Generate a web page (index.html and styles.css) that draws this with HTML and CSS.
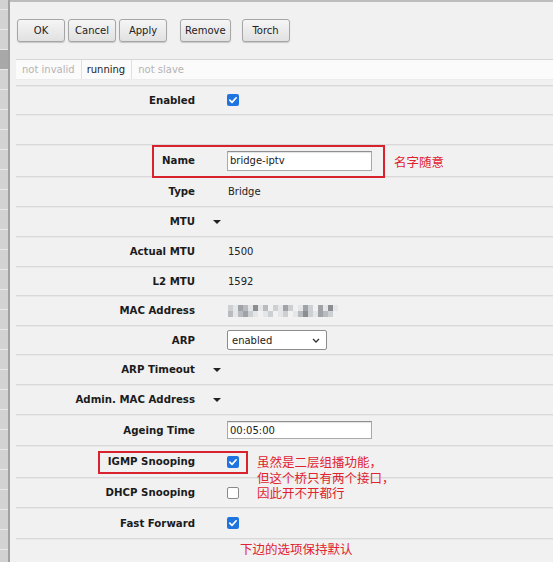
FILE: index.html
```html
<!DOCTYPE html>
<html lang="zh">
<head>
<meta charset="utf-8">
<title>Bridge</title>
<link rel="stylesheet" href="styles.css">
</head>
<body>
<div class="app">
  <div class="rail">
    <div class="rail-cell first"></div>
    <div class="rail-cell"></div>
    <div class="rail-cell"></div>
    <div class="rail-cell sel"></div>
    <div class="rail-cell"></div>
    <div class="rail-cell"></div>
    <div class="rail-cell"></div>
    <div class="rail-cell"></div>
    <div class="rail-cell"></div>
    <div class="rail-cell"></div>
    <div class="rail-cell"></div>
    <div class="rail-cell"></div>
    <div class="rail-cell"></div>
    <div class="rail-cell"></div>
    <div class="rail-cell"></div>
    <div class="rail-cell"></div>
    <div class="rail-cell"></div>
    <div class="rail-cell"></div>
    <div class="rail-cell"></div>
    <div class="rail-cell"></div>
    <div class="rail-cell"></div>
    <div class="rail-cell"></div>
    <div class="rail-cell"></div>
    <div class="rail-cell"></div>
    <div class="rail-cell"></div>
    <div class="rail-cell"></div>
    <div class="rail-cell"></div>
    <div class="rail-cell"></div>
    <div class="rail-cell"></div>
  </div>
  <main class="main">
    <div class="toolbar">
      <button class="btn">OK</button>
      <button class="btn">Cancel</button>
      <button class="btn">Apply</button>
      <button class="btn sep1">Remove</button>
      <button class="btn sep2">Torch</button>
    </div>
    <div class="status">
      <span class="tab">not invalid</span>
      <span class="tab on">running</span>
      <span class="tab last">not slave</span>
    </div>
    <div class="form">
      <div class="row s">
        <span class="label">Enabled</span><span></span>
        <span class="value"><span class="cb on"><svg viewBox="0 0 12 12" width="12" height="12"><path d="M2.8 6.2l2.2 2.2 4.2-4.6" fill="none" stroke="#fff" stroke-width="1.7" stroke-linecap="round" stroke-linejoin="round"/></svg></span></span>
      </div>
      <div class="row"><span></span><span></span><span></span></div>
      <div class="row l">
        <span class="label">Name</span><span></span>
        <span class="value"><input class="field" type="text" value="bridge-iptv"></span>
      </div>
      <div class="row">
        <span class="label">Type</span><span></span>
        <span class="value">Bridge</span>
      </div>
      <div class="row">
        <span class="label">MTU</span><span class="toggle"><span class="tri"></span></span>
        <span class="value"></span>
      </div>
      <div class="row">
        <span class="label">Actual MTU</span><span></span>
        <span class="value">1500</span>
      </div>
      <div class="row s">
        <span class="label">L2 MTU</span><span></span>
        <span class="value">1592</span>
      </div>
      <div class="row">
        <span class="label">MAC Address</span><span></span>
        <span class="value">
          <span class="mosaic">
            <i class="p2"></i><i class="p1"></i><i class="p4"></i><i class="p3"></i><i class="p1"></i><i class="p5"></i><i class="p1"></i><i class="p3"></i><i class="p0"></i><i class="p2"></i><i class="p1"></i><i class="p4"></i><i class="p2"></i><i class="p0"></i><i class="p1"></i><i class="p4"></i><i class="p2"></i><i class="p0"></i><i class="p4"></i><i class="p1"></i><i class="p5"></i><i class="p1"></i>
            <i class="p3"></i><i class="p1"></i><i class="p3"></i><i class="p4"></i><i class="p2"></i><i class="p1"></i><i class="p0"></i><i class="p1"></i><i class="p2"></i><i class="p0"></i><i class="p1"></i><i class="p2"></i><i class="p0"></i><i class="p1"></i><i class="p3"></i><i class="p5"></i><i class="p2"></i><i class="p1"></i><i class="p4"></i><i class="p3"></i><i class="p2"></i><i class="p0"></i>
          </span>
        </span>
      </div>
      <div class="row s">
        <span class="label">ARP</span><span></span>
        <span class="value"><span class="select">enabled<svg viewBox="0 0 8 5" width="8" height="5"><path d="M1 1l3 3 3-3" fill="none" stroke="#333" stroke-width="1.3"/></svg></span></span>
      </div>
      <div class="row">
        <span class="label">ARP Timeout</span><span class="toggle"><span class="tri"></span></span>
        <span class="value"></span>
      </div>
      <div class="row">
        <span class="label">Admin. MAC Address</span><span class="toggle"><span class="tri"></span></span>
        <span class="value"></span>
      </div>
      <div class="row m">
        <span class="label">Ageing Time</span><span></span>
        <span class="value"><input class="field short" type="text" value="00:05:00"></span>
      </div>
      <div class="row l">
        <span class="label">IGMP Snooping</span><span></span>
        <span class="value"><span class="cb on"><svg viewBox="0 0 12 12" width="12" height="12"><path d="M2.8 6.2l2.2 2.2 4.2-4.6" fill="none" stroke="#fff" stroke-width="1.7" stroke-linecap="round" stroke-linejoin="round"/></svg></span></span>
      </div>
      <div class="row">
        <span class="label">DHCP Snooping</span><span></span>
        <span class="value"><span class="cb"></span></span>
      </div>
      <div class="row m">
        <span class="label">Fast Forward</span><span></span>
        <span class="value"><span class="cb on"><svg viewBox="0 0 12 12" width="12" height="12"><path d="M2.8 6.2l2.2 2.2 4.2-4.6" fill="none" stroke="#fff" stroke-width="1.7" stroke-linecap="round" stroke-linejoin="round"/></svg></span></span>
      </div>
      <div class="row"><span></span><span></span><span></span></div>

      <div class="mark mark-name"></div>
      <div class="note note-name">名字随意</div>
      <div class="mark mark-igmp"></div>
      <div class="note note-igmp">
        <div class="note-line">虽然是二层组播功能，</div>
        <div class="note-line">但这个桥只有两个接口，</div>
        <div class="note-line">因此开不开都行</div>
      </div>
      <div class="note note-bottom">下边的选项保持默认</div>
    </div>
  </main>
</div>
</body>
</html>
```

FILE: styles.css
```css
* {
  box-sizing: border-box;
}

html,
body {
  margin: 0;
  padding: 0;
}

body {
  width: 553px;
  height: 562px;
  overflow: hidden;
  font-family: "DejaVu Sans", Verdana, sans-serif;
  font-size: 10px;
  color: #222;
  background: #f1f1f1;
}

.app {
  display: flex;
  height: 562px;
}

/* left list edge */
.rail {
  flex: none;
  width: 10px;
  display: flex;
  flex-direction: column;
  background: #d2d2d2;
  border-right: 2px solid #a2a2a2;
  overflow: hidden;
}

.rail-cell {
  flex: none;
  height: 20px;
  border-bottom: 1px solid #e8e8e8;
}

.rail-cell.first {
  height: 10px;
}

.rail-cell.sel {
  background: #a8a8a8;
}

.main {
  flex: 1;
  display: flex;
  flex-direction: column;
  border-top: 2px solid #bdbdbd;
  padding-left: 6px;
  overflow: hidden;
}

/* toolbar */
.toolbar {
  flex: none;
  display: flex;
  gap: 3px;
  padding: 17px 0 0 1px;
}

.btn {
  height: 23px;
  min-width: 48px;
  padding: 0 4px;
  border: 1px solid #a6a6a6;
  border-radius: 3px;
  background: linear-gradient(#f5f5f5, #e1e1e1);
  box-shadow: 0 1px 1px rgba(0, 0, 0, 0.18);
  font: inherit;
  font-size: 10px;
  color: #222;
  display: flex;
  align-items: center;
  justify-content: center;
}

.btn.sep1 {
  margin-left: 10px;
}

.btn.sep2 {
  margin-left: 8px;
}

/* status bar */
.status {
  flex: none;
  display: flex;
  height: 21px;
  margin-top: 17px;
  margin-bottom: 5px;
  background: #fbfbfb;
  border-top: 1px solid #d6d6d6;
  border-bottom: 1px solid #ececec;
}

.tab {
  display: flex;
  align-items: center;
  padding: 0 6px 0 6px;
  color: #b4b4b4;
  border-right: 1px solid #e0e0e0;
}

.tab.on {
  color: #222;
  padding: 0 6px 0 5px;
}

.tab.last {
  border-right: none;
}

/* form */
.form {
  flex: none;
  position: relative;
  display: flex;
  flex-direction: column;
}

.row {
  display: grid;
  grid-template-columns: 179px 33px 1fr;
  align-items: center;
  height: 30px;
  flex: none;
  border-top: 1px solid #d9d9d9;
  box-shadow: inset 0 1px 0 #e8e8e8;
}

.row.s {
  height: 29px;
}

.row.m {
  height: 31px;
}

.row.l {
  height: 32px;
}

.label {
  text-align: right;
  font-weight: bold;
  font-size: 10.2px;
  color: #1b1b1b;
}

.value {
  display: flex;
  align-items: center;
  color: #222;
}

.toggle {
  display: flex;
  padding-left: 18px;
}

.tri {
  width: 0;
  height: 0;
  border-left: 4px solid transparent;
  border-right: 4px solid transparent;
  border-top: 4px solid #222;
}

.field {
  width: 145px;
  height: 20px;
  margin-left: -1px;
  padding: 0 2px;
  border: 1px solid #a9a9a9;
  border-top-color: #8e8e8e;
  box-shadow: inset 0 1px 1px rgba(0, 0, 0, 0.12);
  background: #fff;
  font-family: "DejaVu Sans", Verdana, sans-serif;
  font-size: 10px;
  color: #222;
}

.field.short {
  height: 18px;
}

.cb {
  width: 12px;
  height: 12px;
  margin-left: -1px;
  border-radius: 2px;
  border: 1px solid #8a8a8a;
  background: #fff;
  display: flex;
}

.cb.on {
  border: none;
  background: #1f74df;
}

.select {
  width: 100px;
  height: 20px;
  margin-left: -1px;
  padding: 0 6px 0 4px;
  border: 1px solid #8c8c8c;
  border-radius: 2px;
  background: #fff;
  display: flex;
  align-items: center;
  justify-content: space-between;
}

.mosaic {
  display: grid;
  grid-template-columns: repeat(22, 5px);
  grid-auto-rows: 6px;
}

.mosaic i {
  display: block;
}

.p0 { background: #f1f1f1; }
.p1 { background: #e4e6e8; }
.p2 { background: #cdd0d3; }
.p3 { background: #b8bcc0; }
.p4 { background: #9fa3a7; }
.p5 { background: #8a8d91; }

/* annotations */
.mark {
  position: absolute;
  border: 2px solid #d8222e;
}

.mark-name {
  left: 136px;
  top: 60px;
  width: 233px;
  height: 33px;
}

.mark-igmp {
  left: 82px;
  top: 366px;
  width: 150px;
  height: 23px;
}

.note {
  position: absolute;
  font-family: "Noto Sans CJK SC", sans-serif;
  font-size: 12.5px;
  line-height: 16px;
  color: #e0232f;
  white-space: nowrap;
}

.note-name {
  left: 378px;
  top: 69px;
}

.note-igmp {
  left: 241px;
  top: 369px;
  display: flex;
  flex-direction: column;
}

.note-line {
  height: 15.5px;
  line-height: 15.5px;
}

.note-bottom {
  left: 224px;
  top: 456px;
}
```
